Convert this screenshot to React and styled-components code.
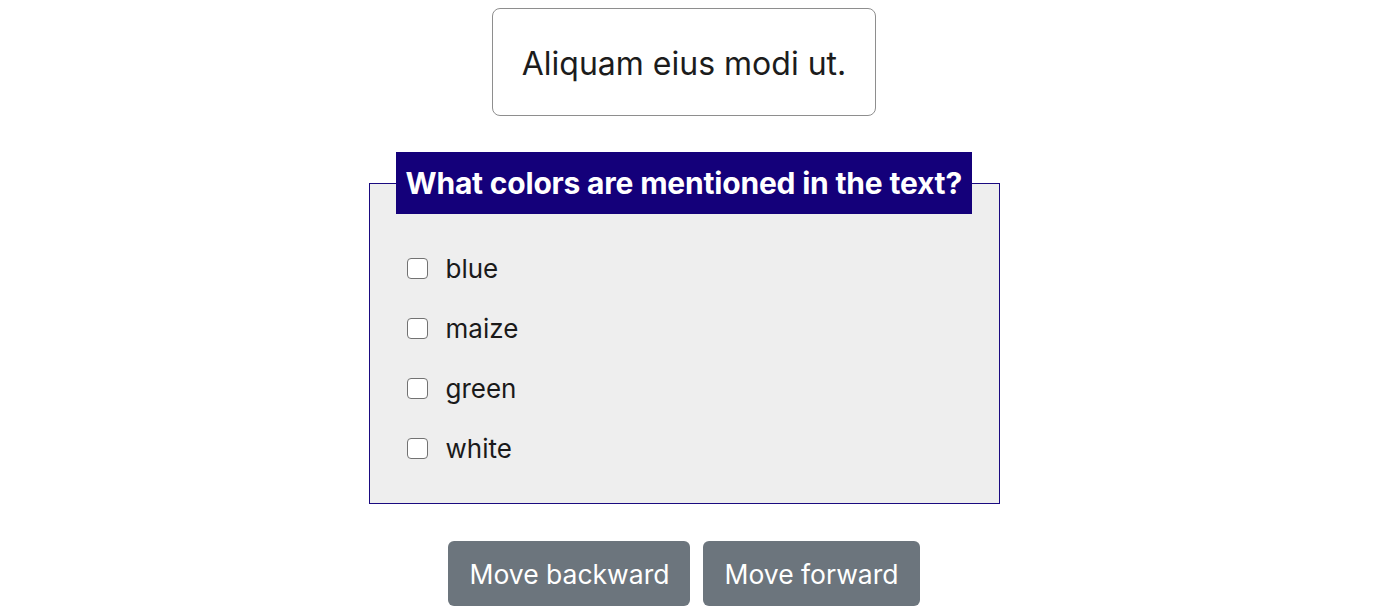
import React from "react";
import styled, { createGlobalStyle } from "styled-components";

const Global = createGlobalStyle`
  html, body { margin: 0; padding: 0; background: #ffffff; }
  body { font-family: Inter, "Noto Sans", "Liberation Sans", sans-serif; color: #1a1a1a; }
`;

const Page = styled.div`
  width: 1368px;
  padding-top: 8px;
  display: flex;
  flex-direction: column;
  align-items: center;
`;

const Card = styled.div`
  box-sizing: border-box;
  width: 384px;
  height: 108px;
  padding-top: 3px;
  border: 1px solid #8e8e8e;
  border-radius: 8px;
  display: flex;
  align-items: center;
  justify-content: center;
  font-size: 32px;
  color: #1c1c1c;
`;

const Fieldset = styled.fieldset`
  box-sizing: border-box;
  width: 631px;
  margin: 36px 0 0;
  padding: 0;
  min-width: 0;
  background: #eeeeee;
  border: 1px solid #1a0a80;
`;

const Legend = styled.legend`
  margin-left: 26px;
  padding: 0 10px;
  background: #14007a;
  color: #ffffff;
  font-size: 30px;
  font-weight: 700;
  line-height: 62px;
  letter-spacing: -0.2px;
`;

const List = styled.div`
  display: flex;
  flex-direction: column;
  padding: 24px 0 25px 37px;
`;

const Row = styled.label`
  height: 60px;
  display: flex;
  align-items: center;
  gap: 18px;
  font-size: 26px;
  color: #1a1a1a;
`;

const Check = styled.input.attrs({ type: "checkbox" })`
  appearance: none;
  margin: 0;
  box-sizing: border-box;
  width: 21px;
  height: 21px;
  border: 1.5px solid #727272;
  border-radius: 4px;
  background: #ffffff;
`;

const Actions = styled.div`
  display: flex;
  gap: 13px;
  margin-top: 37px;
`;

const Button = styled.button`
  height: 65px;
  padding: 0 21px;
  border: none;
  border-radius: 6px;
  background: #6c757d;
  color: #ffffff;
  font-family: Inter, "Noto Sans", sans-serif;
  font-size: 26.5px;
  font-weight: 400;
`;

const options = ["blue", "maize", "green", "white"];

export default function App() {
  return (
    <>
      <Global />
      <Page>
        <Card>Aliquam eius modi ut.</Card>
        <Fieldset>
          <Legend>What colors are mentioned in the text?</Legend>
          <List>
            {options.map((o) => (
              <Row key={o}>
                <Check />
                {o}
              </Row>
            ))}
          </List>
        </Fieldset>
        <Actions>
          <Button>Move backward</Button>
          <Button>Move forward</Button>
        </Actions>
      </Page>
    </>
  );
}
